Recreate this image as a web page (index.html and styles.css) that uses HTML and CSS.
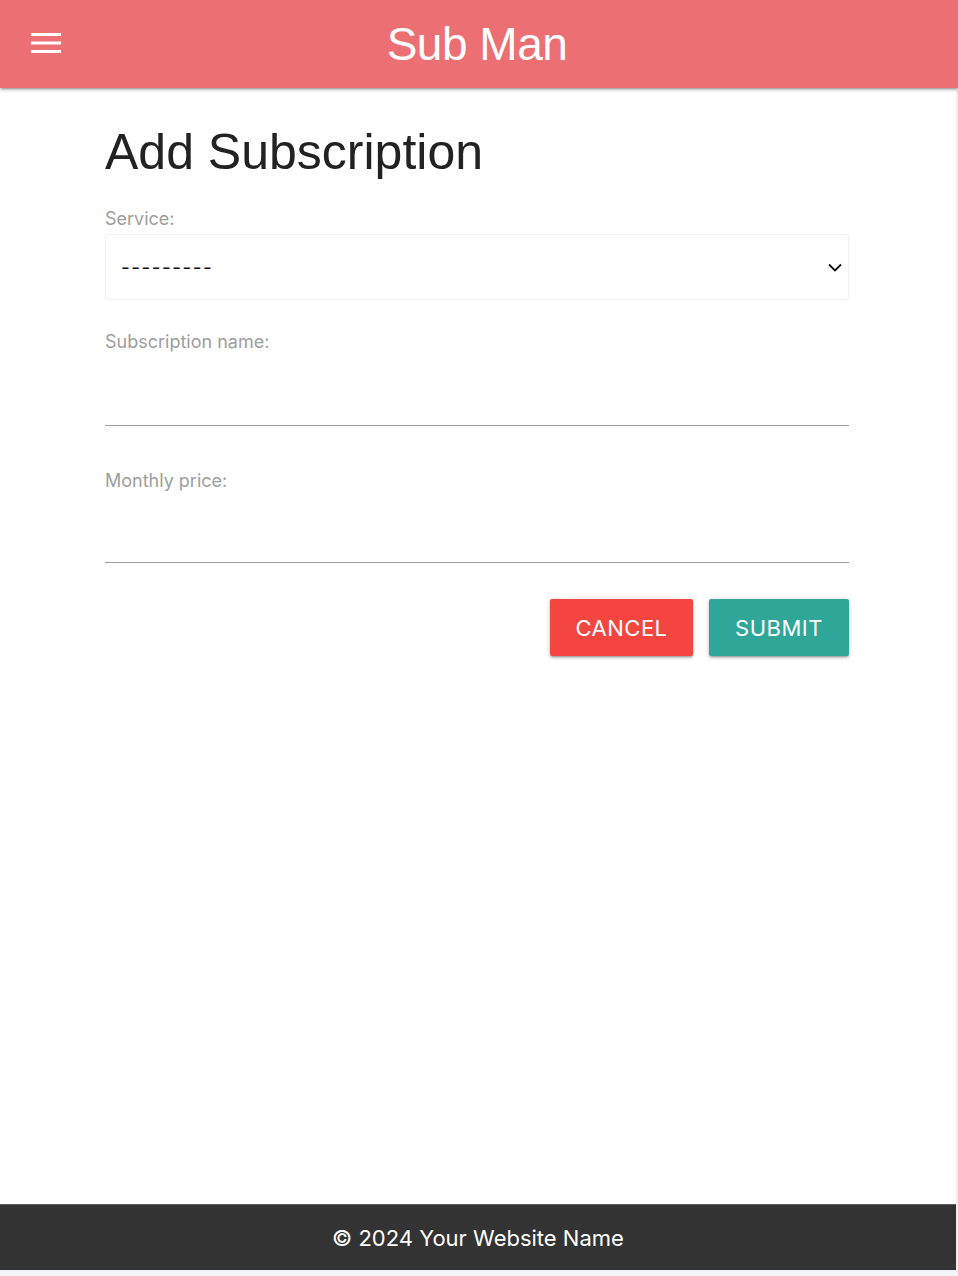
FILE: index.html
```html
<!DOCTYPE html>
<html>
<head>
<meta charset="utf-8">
<title>Sub Man</title>
<link rel="stylesheet" href="styles.css">
</head>
<body>
<div class="page">
  <header class="navbar">
    <button class="menu" aria-label="menu">
      <svg width="30" height="20" viewBox="0 0 30 20"><rect x="0" y="0" width="30" height="3" fill="#fff"/><rect x="0" y="8.5" width="30" height="3" fill="#fff"/><rect x="0" y="17" width="30" height="3" fill="#fff"/></svg>
    </button>
    <div class="brand">Sub Man</div>
  </header>
  <main class="container">
    <h1 class="title">Add Subscription</h1>
    <form class="form">
      <div class="field">
        <label class="label">Service:</label>
        <div class="select">
          <span class="select-value">---------</span>
          <svg class="chev" width="14" height="9" viewBox="0 0 14 9"><path d="M1 1.5 L7 7.5 L13 1.5" fill="none" stroke="#111" stroke-width="1.8"/></svg>
        </div>
      </div>
      <div class="field">
        <label class="label">Subscription name:</label>
        <div class="input"></div>
      </div>
      <div class="field field-price">
        <label class="label">Monthly price:</label>
        <div class="input"></div>
      </div>
      <div class="actions">
        <button type="button" class="btn btn-red">CANCEL</button>
        <button type="button" class="btn btn-teal">SUBMIT</button>
      </div>
    </form>
  </main>
  <footer class="footer">© 2024 Your Website Name</footer>
</div>
<div class="bottom-strip"></div>
</body>
</html>
```
FILE: styles.css
```css
html, body {
  margin: 0;
  padding: 0;
  height: 100%;
}
body {
  font-family: Inter, "Noto Sans", sans-serif;
  background: #f0f3f8;
  display: flex;
  flex-direction: column;
}
.page {
  flex: 1;
  display: flex;
  flex-direction: column;
  background: #fff;
  border-right: 2px solid #eeeeee;
}
.navbar {
  height: 88px;
  background: #ec6f74;
  margin-right: -2px;
  display: flex;
  align-items: center;
  justify-content: center;
  position: relative;
  box-shadow: 0 2px 2px 0 rgba(0,0,0,0.14), 0 3px 1px -2px rgba(0,0,0,0.12), 0 1px 5px 0 rgba(0,0,0,0.2);
}
.menu {
  position: absolute;
  left: 31px;
  top: 33px;
  background: none;
  border: 0;
  padding: 0;
  width: 30px;
  height: 20px;
  display: block;
}
.menu svg { display: block; }
.brand {
  color: #fff;
  font-family: "Liberation Sans", Arial, sans-serif;
  font-size: 46px;
  letter-spacing: -0.5px;
  line-height: 1;
  margin-left: -4px;
}
.container {
  flex: 1;
  padding: 0 107px 0 105px;
}
.title {
  margin: 34px 0 0;
  font-family: "Liberation Sans", Arial, sans-serif;
  font-size: 50px;
  font-weight: 400;
  color: #222;
  line-height: 60px;
}
.form {
  margin-top: 27px;
}
.label {
  display: block;
  color: #9e9e9e;
  font-size: 18px;
  line-height: 20px;
}
.select {
  margin-top: 5px;
  height: 64px;
  border: 1px solid #efefef;
  border-radius: 3px;
  display: flex;
  align-items: center;
  justify-content: space-between;
  padding: 0 6px 0 15px;
}
.select-value {
  font-size: 19px;
  color: #111;
  letter-spacing: 1.5px;
}
.field + .field { margin-top: 32px; }
.field.field-price { margin-top: 45px; }
.input {
  height: 73px;
  border-bottom: 1px solid #9e9e9e;
}
.field-price .input { height: 71px; }
.actions {
  display: flex;
  justify-content: flex-end;
  gap: 16px;
  margin-top: 36px;
}
.btn {
  height: 57px;
  border: 0;
  border-radius: 2px;
  color: #fff;
  font-family: Inter, "Noto Sans", sans-serif;
  font-size: 22px;
  letter-spacing: 0.5px;
  padding: 0;
  box-shadow: 0 2px 2px 0 rgba(0,0,0,0.14), 0 3px 1px -2px rgba(0,0,0,0.12), 0 1px 5px 0 rgba(0,0,0,0.2);
}
.btn-red { background: #f44540; width: 143px; }
.btn-teal { background: #2ea698; width: 140px; }
.footer {
  height: 65px;
  background: #333333;
  border-top: 1px solid #5a5a5a;
  color: #fff;
  display: flex;
  align-items: center;
  justify-content: center;
  font-size: 22px;
}
.bottom-strip {
  height: 6px;
  background: #f0f3f8;
}
```
